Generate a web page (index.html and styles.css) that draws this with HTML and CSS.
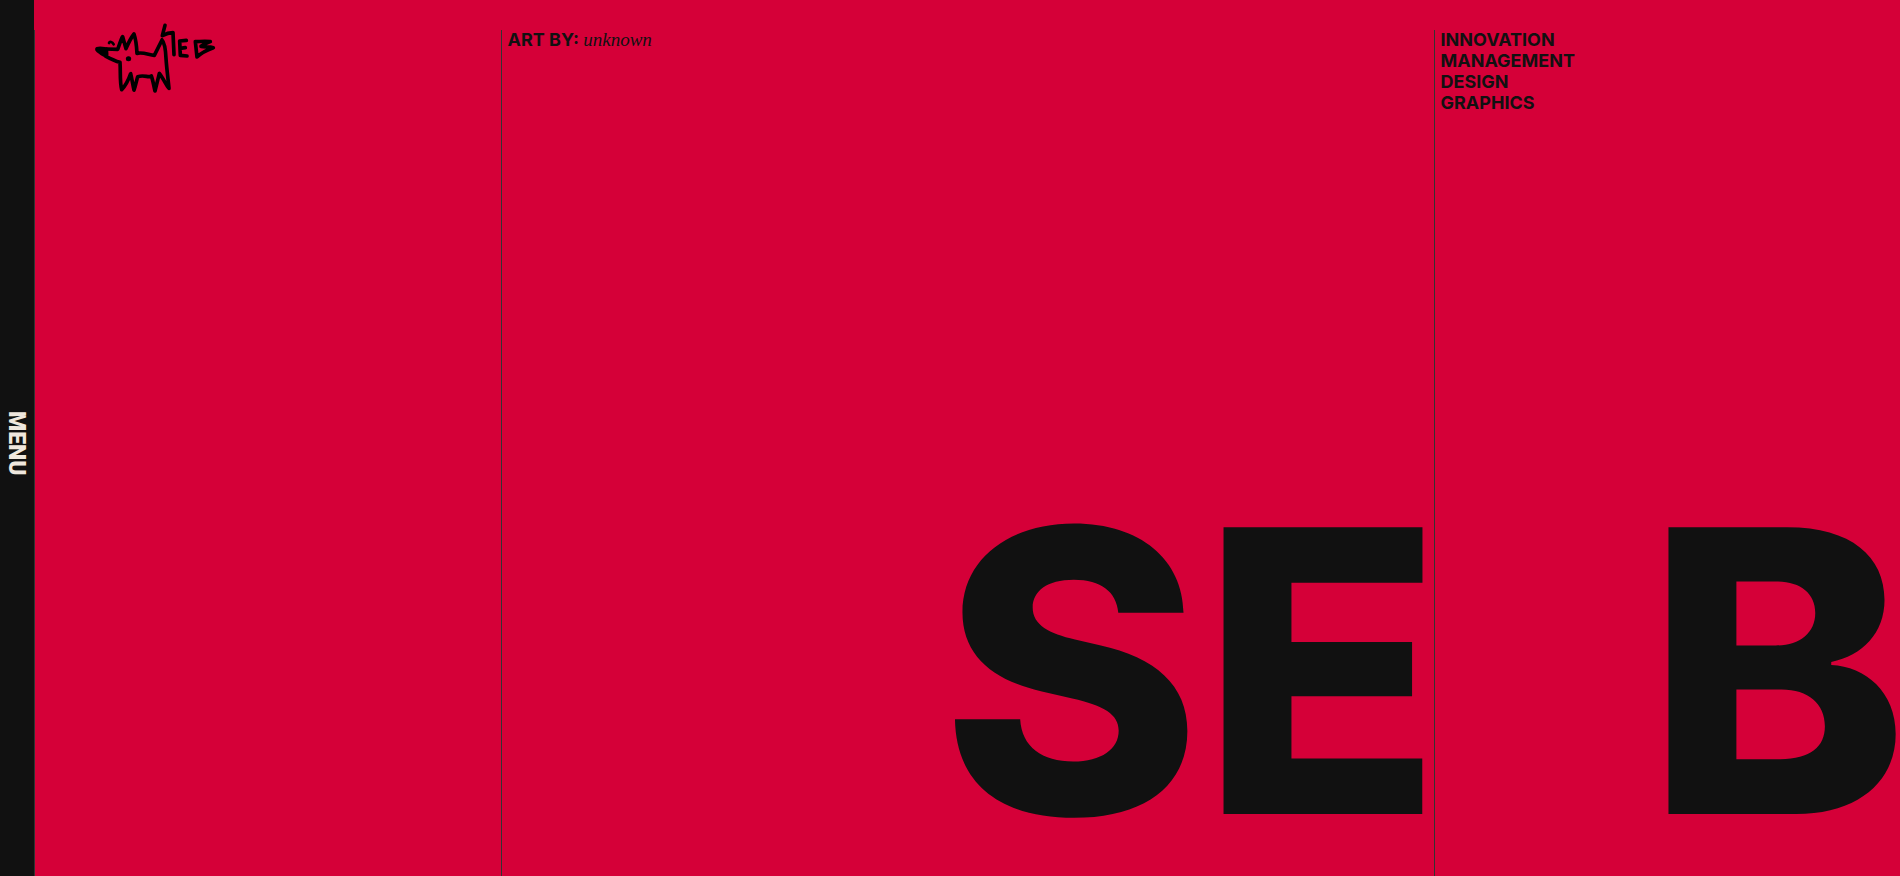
FILE: index.html
```
<!DOCTYPE html>
<html lang="en">
<head>
<meta charset="utf-8">
<meta name="viewport" content="width=device-width, initial-scale=1">
<title>SEB</title>
<link rel="stylesheet" href="styles.css">
</head>
<body>
<div class="page">
  <button class="menu" type="button">MENU</button>
  <main class="columns">
    <section class="column">
      <a class="logo" href="#" aria-label="SEB">
        <svg class="logo-art" viewBox="0 0 420 255" fill="none" stroke="#000" stroke-width="11" stroke-linecap="round" stroke-linejoin="round">
          <path d="M64 102L98 103C104 88 108 72 113 65L123 101C130 84 140 66 147 57C153 74 155 96 156 115C175 111 190 119 208 121L231 75M231 75C240 84 242 108 243 130C245 160 249 190 252 220C243 210 235 190 223 175C219 192 215 208 210 228C206 212 204 196 199 183C190 190 180 178 158 185C154 198 152 212 147 225C143 208 141 192 137 176C130 196 122 212 110 224C104 200 107 170 105 142C90 138 74 130 63 124"/>
          <path d="M36 101C46 98 56 101 64 102L65 118L61 122C52 117 42 112 36 104Z" fill="#000"/>
          <path d="M72 84C74 79 82 80 86 88" stroke-width="8"/>
          <path d="M130 131h1" stroke-width="15"/>
          <path d="M240 31L232 62C243 56 254 53 264 53L267 119"/>
          <path d="M304 76L284 78L286 121L306 123M285 100L301 98"/>
          <path d="M331 80L336 126C350 112 368 104 385 98C374 95 360 96 348 94C356 88 366 84 376 80C360 78 344 80 331 80"/>
        </svg>
      </a>
    </section>
    <section class="column">
      <p class="label">ART BY: <em class="artist">unknown</em></p>
      <h1 class="giant">SE</h1>
    </section>
    <section class="column">
      <ul class="label topics">
        <li>INNOVATION</li>
        <li>MANAGEMENT</li>
        <li>DESIGN</li>
        <li>GRAPHICS</li>
      </ul>
      <div class="giant">B</div>
    </section>
  </main>
</div>
</body>
</html>
```
FILE: styles.css
```
* {
  box-sizing: border-box;
}

body {
  margin: 0;
  background: #d50038;
  color: #111;
  font-family: Inter, "Liberation Sans", sans-serif;
}

.page {
  display: flex;
  min-height: 100vh;
  overflow: hidden;
}

.menu {
  flex: 0 0 34px;
  padding: 10px 1px 0 0;
  border: 0;
  background: #111;
  color: #efe7de;
  font: 900 23px/33px Roboto, sans-serif;
  writing-mode: vertical-rl;
  text-align: center;
  cursor: pointer;
}

.columns {
  flex: 1;
  display: grid;
  grid-template-columns: minmax(0, 1fr) minmax(0, 2fr) minmax(0, 1fr);
  padding-top: 30px;
}

.column {
  display: flex;
  flex-direction: column;
  justify-content: space-between;
  border-left: 1px solid #333;
  padding-left: 6px;
}

.logo {
  display: block;
  width: 140px;
  margin: -15px 0 0 44px;
}

.logo-art {
  display: block;
  width: 100%;
}

.label {
  margin: -1px 0 0;
  padding: 0;
  font-size: 18px;
  font-weight: 700;
  line-height: 21px;
}

.artist {
  font-family: "Liberation Serif", serif;
  font-size: 19px;
  font-weight: 400;
  line-height: 20px;
}

.topics {
  list-style: none;
}

.giant {
  margin: 0 -8px 0 0;
  padding-bottom: 66px;
  font-size: 394px;
  font-weight: 800;
  line-height: 279px;
  text-align: right;
}
```
